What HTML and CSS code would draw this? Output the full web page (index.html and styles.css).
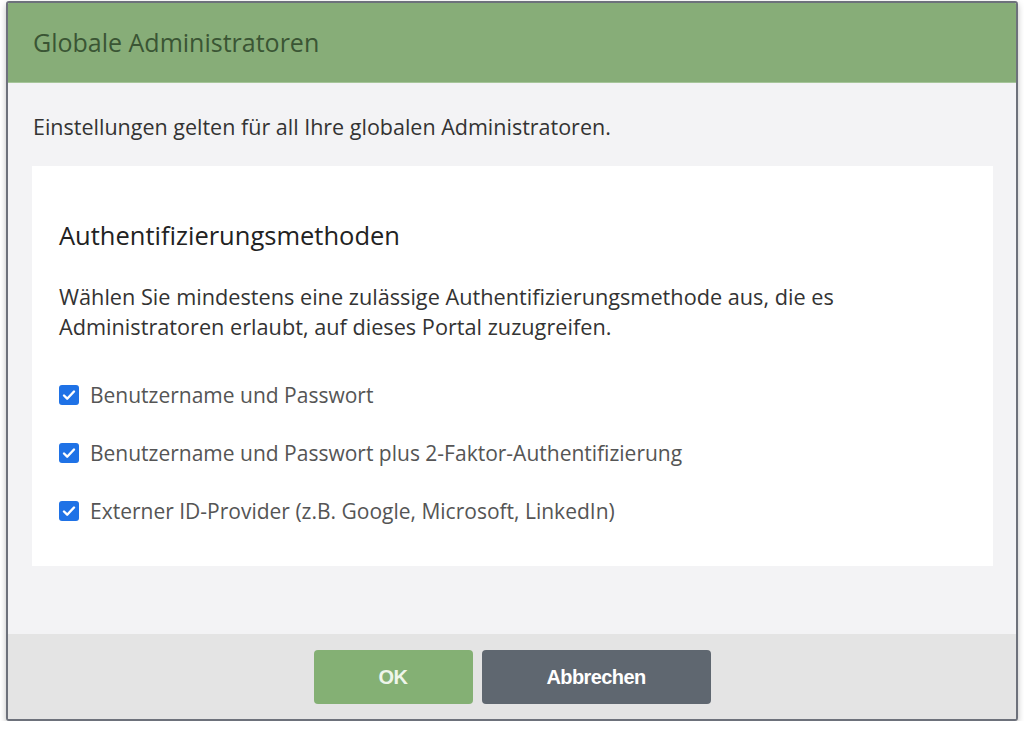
FILE: index.html
```html
<!DOCTYPE html>
<html lang="de">
<head>
<meta charset="utf-8">
<link rel="stylesheet" href="styles.css">
</head>
<body>
<div class="dialog">
  <div class="header"><h1 class="title">Globale Administratoren</h1></div>
  <div class="body">
    <p class="intro">Einstellungen gelten für all Ihre globalen Administratoren.</p>
    <div class="card">
      <h2 class="heading">Authentifizierungsmethoden</h2>
      <p class="desc">Wählen Sie mindestens eine zulässige Authentifizierungsmethode aus, die es<br>Administratoren erlaubt, auf dieses Portal zuzugreifen.</p>
      <div class="options">
        <label class="option"><span class="box"><svg viewBox="0 0 20 20" width="20" height="20"><path d="M5 10.5l3.2 3.2L15 6.5" fill="none" stroke="#fff" stroke-width="2.4" stroke-linecap="round" stroke-linejoin="round"/></svg></span>Benutzername und Passwort</label>
        <label class="option"><span class="box"><svg viewBox="0 0 20 20" width="20" height="20"><path d="M5 10.5l3.2 3.2L15 6.5" fill="none" stroke="#fff" stroke-width="2.4" stroke-linecap="round" stroke-linejoin="round"/></svg></span>Benutzername und Passwort plus 2-Faktor-Authentifizierung</label>
        <label class="option"><span class="box"><svg viewBox="0 0 20 20" width="20" height="20"><path d="M5 10.5l3.2 3.2L15 6.5" fill="none" stroke="#fff" stroke-width="2.4" stroke-linecap="round" stroke-linejoin="round"/></svg></span>Externer ID-Provider (z.B. Google, Microsoft, LinkedIn)</label>
      </div>
    </div>
  </div>
  <div class="footer">
    <button class="btn btn-ok">OK</button>
    <button class="btn btn-cancel">Abbrechen</button>
  </div>
</div>
</body>
</html>
```
FILE: styles.css
```css
html, body {
  margin: 0;
  padding: 0;
  background: #ffffff;
}
body {
  font-family: "Open Sans", "Noto Sans", sans-serif;
}
.dialog {
  box-sizing: border-box;
  margin: 1px 0 0 6px;
  width: 1012px;
  height: 720px;
  border: 2px solid #6d717b;
  border-radius: 3px;
  background: #f3f3f5;
  display: flex;
  flex-direction: column;
  overflow: hidden;
  box-shadow: 0 3px 6px rgba(0,0,0,0.25);
}
.header {
  height: 80px;
  flex: none;
  background: #87ad78;
  border-bottom: 1px solid #a6c59a;
  display: flex;
  align-items: center;
  padding-left: 25px;
  box-sizing: border-box;
}
.title {
  margin: 0;
  font-size: 25px;
  font-weight: 400;
  color: #3a5534;
  line-height: 30px;
  padding-bottom: 2px;
}
.body {
  flex: 1;
  padding: 0 23px 0 24px;
}
.intro {
  margin: 29px 0 0 1px;
  font-size: 21.5px;
  line-height: 30px;
  color: #333;
}
.card {
  margin-top: 24px;
  background: #ffffff;
  padding: 53px 27px 40px 27px;
}
.heading {
  margin: 0;
  font-size: 25.5px;
  font-weight: 400;
  line-height: 32px;
  color: #222;
}
.desc {
  margin: 31px 0 0 0;
  font-size: 21.7px;
  line-height: 30px;
  color: #333;
}
.options {
  margin-top: 38px;
  display: flex;
  flex-direction: column;
  gap: 28px;
}
.option {
  display: flex;
  align-items: center;
  height: 30px;
  font-size: 21px;
  color: #555;
}
.box {
  width: 20px;
  height: 20px;
  border-radius: 3px;
  background: #1f72e6;
  margin-right: 11px;
  display: flex;
  flex: none;
}
.footer {
  height: 85px;
  flex: none;
  background: #e4e4e4;
  display: flex;
  justify-content: center;
  align-items: flex-start;
  padding-top: 16px;
  box-sizing: border-box;
  gap: 9px;
}
.btn {
  height: 54px;
  border: none;
  border-radius: 4px;
  font-family: "Liberation Sans", Arial, sans-serif;
  font-weight: 700;
  font-size: 20px;
  color: #fff;
  letter-spacing: -0.6px;
}
.btn-ok {
  width: 159px;
  background: #84b074;
  color: #eef5ea;
}
.btn-cancel {
  width: 229px;
  background: #5f6770;
}
```
